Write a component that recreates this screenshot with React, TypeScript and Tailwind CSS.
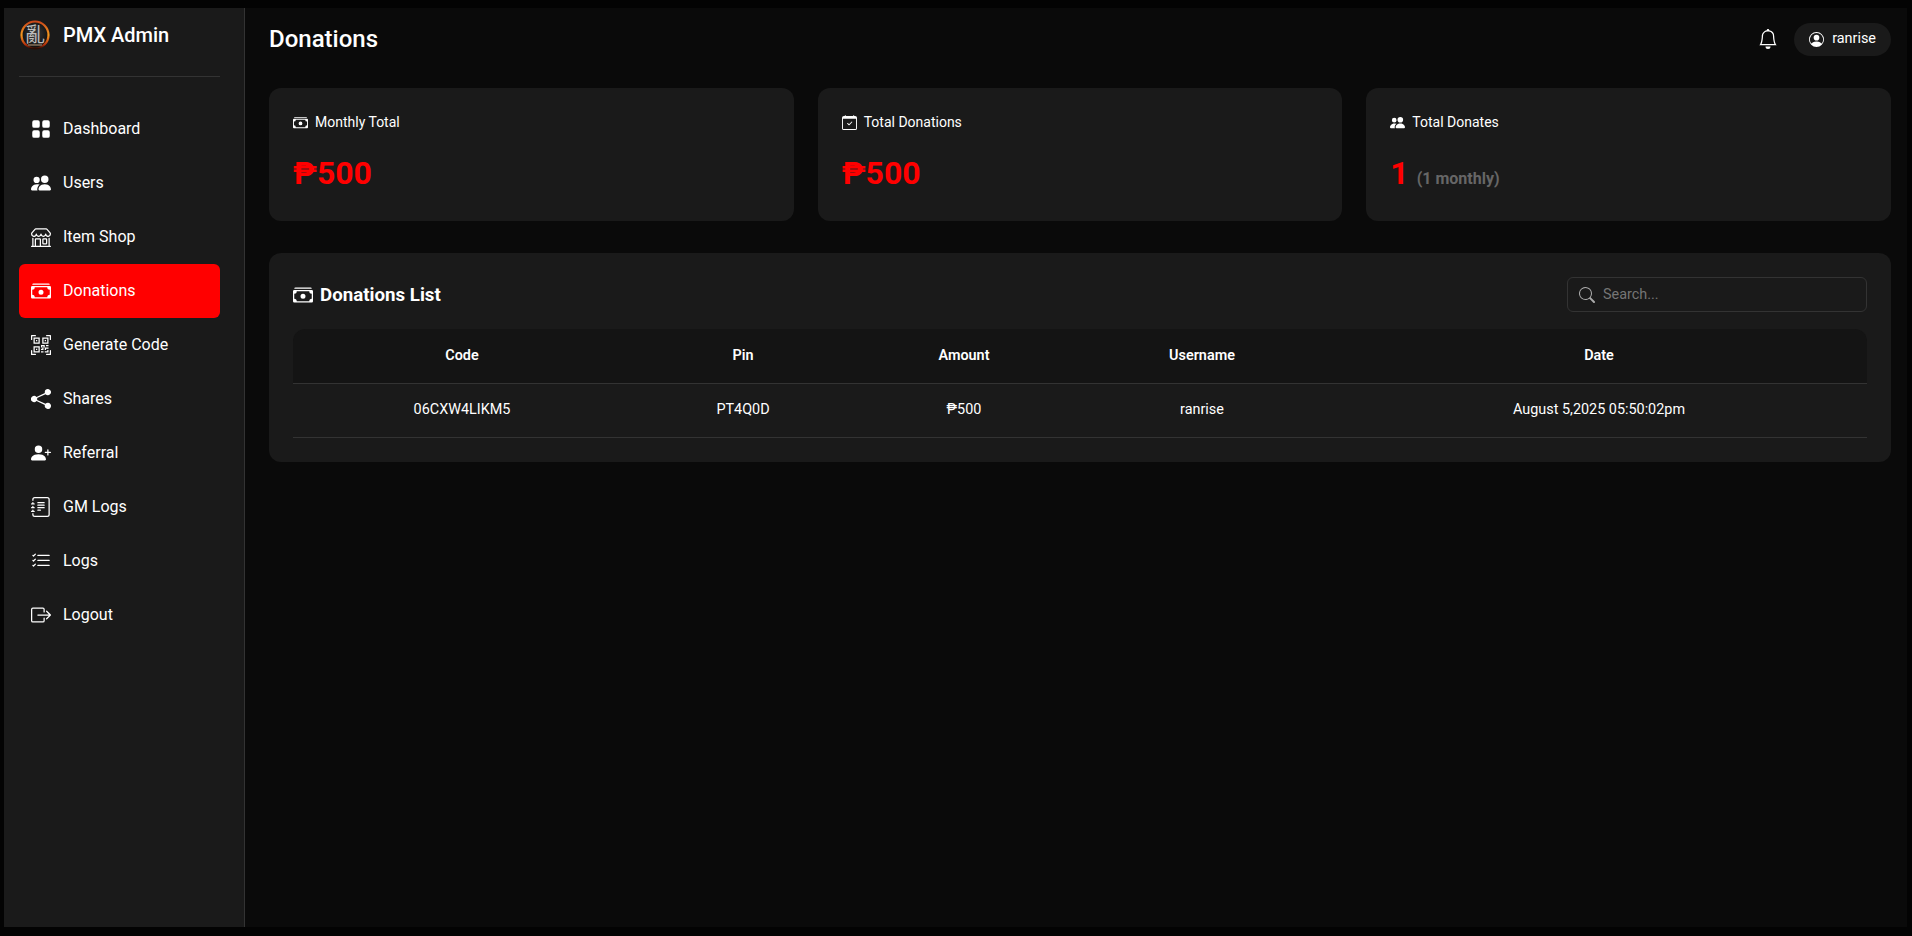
import { FC, ReactNode } from "react";
import {
  BsBell,
  BsBoxArrowRight,
  BsCalendarCheck,
  BsCashStack,
  BsFillGridFill,
  BsJournalText,
  BsListCheck,
  BsPeopleFill,
  BsPersonCircle,
  BsPersonPlusFill,
  BsQrCodeScan,
  BsSearch,
  BsShareFill,
  BsShop,
} from "react-icons/bs";

const navItems = [
  { label: "Dashboard", icon: <BsFillGridFill /> },
  { label: "Users", icon: <BsPeopleFill /> },
  { label: "Item Shop", icon: <BsShop /> },
  { label: "Donations", icon: <BsCashStack />, active: true },
  { label: "Generate Code", icon: <BsQrCodeScan /> },
  { label: "Shares", icon: <BsShareFill /> },
  { label: "Referral", icon: <BsPersonPlusFill /> },
  { label: "GM Logs", icon: <BsJournalText /> },
  { label: "Logs", icon: <BsListCheck /> },
  { label: "Logout", icon: <BsBoxArrowRight /> },
];

const Logo: FC = () => (
  <svg width="32" height="32" viewBox="0 0 32 32" className="shrink-0">
    <defs>
      <radialGradient id="logoFill" cx="50%" cy="45%" r="55%">
        <stop offset="0%" stopColor="#3d3d3d" />
        <stop offset="100%" stopColor="#0d0d0d" />
      </radialGradient>
      <linearGradient id="logoRing" x1="0" y1="0" x2="0" y2="1">
        <stop offset="0%" stopColor="#c9471a" />
        <stop offset="50%" stopColor="#f59a1f" />
        <stop offset="85%" stopColor="#b8320c" />
        <stop offset="100%" stopColor="#2a0c04" />
      </linearGradient>
    </defs>
    <circle cx="16" cy="16" r="13.5" fill="url(#logoFill)" stroke="url(#logoRing)" strokeWidth="2.2" />
    <text
      x="16"
      y="23"
      textAnchor="middle"
      fontSize="20"
      fill="#bdbdbd"
      fontFamily="'Noto Sans CJK TC', sans-serif"
    >
      亂
    </text>
    <rect x="9" y="25" width="14" height="2" fill="#6b5a4a" />
  </svg>
);

const StatCard: FC<{ icon: ReactNode; label: string; children: ReactNode }> = ({
  icon,
  label,
  children,
}) => (
  <div className="flex-1 h-[133px] bg-[#1a1a1a] rounded-xl pt-6 px-6">
    <div className="flex items-center gap-[7px] text-sm h-5 text-white">
      <span className="text-[15px]">{icon}</span>
      {label}
    </div>
    <div className="mt-[17px] flex items-baseline">{children}</div>
  </div>
);

const App: FC = () => {
  return (
    <div className="h-screen bg-[#030303] pt-2 pl-1 pr-[5px] pb-[9px] overflow-hidden font-['Roboto',sans-serif] text-white">
      <div className="h-full flex bg-[#0a0a0a]">
        <aside className="w-[241px] shrink-0 bg-[#1a1a1a] border-r border-[#333] pl-[15px] pr-6">
          <div className="flex items-center gap-3 h-[69px] pb-[14px] border-b border-[#333]">
            <Logo />
            <span className="text-xl font-medium">PMX Admin</span>
          </div>
          <nav className="mt-[25px]">
            {navItems.map((item) => (
              <div
                key={item.label}
                className={`flex items-center h-[54px] pl-3 gap-3 rounded-md ${
                  item.active ? "bg-[#ff0000]" : ""
                }`}
              >
                <span className="text-xl">{item.icon}</span>
                <span className="text-base">{item.label}</span>
              </div>
            ))}
          </nav>
        </aside>

        <main className="flex-1 pl-6 pr-4">
          <header className="h-[60px] pt-[2px] flex items-center justify-between">
            <h1 className="text-2xl font-medium">Donations</h1>
            <div className="flex items-center gap-4">
              <BsBell className="text-xl" />
              <div className="flex items-center gap-2 h-[33px] px-[15px] rounded-full bg-[#1a1a1a] text-[14.4px]">
                <BsPersonCircle className="text-[15px]" />
                ranrise
              </div>
            </div>
          </header>

          <div className="mt-5 flex gap-6">
            <StatCard icon={<BsCashStack />} label="Monthly Total">
              <span className="text-[32px] font-bold text-[#ff0000]">₱500</span>
            </StatCard>
            <StatCard icon={<BsCalendarCheck />} label="Total Donations">
              <span className="text-[32px] font-bold text-[#ff0000]">₱500</span>
            </StatCard>
            <StatCard icon={<BsPeopleFill />} label="Total Donates">
              <span className="text-[32px] font-bold text-[#ff0000]">1</span>
              <span className="ml-2 text-base font-bold text-[#666]">
                (1 monthly)
              </span>
            </StatCard>
          </div>

          <section className="mt-8 bg-[#1a1a1a] rounded-xl p-6">
            <div className="flex items-center justify-between">
              <h2 className="mt-[2px] flex items-center gap-[7px] text-[18.72px] font-bold">
                <BsCashStack className="text-xl" />
                Donations List
              </h2>
              <div className="w-[300px] h-[35px] flex items-center gap-2 px-[11px] rounded-md border border-[#333]">
                <BsSearch className="text-base text-[#aaa]" />
                <span className="text-[14.4px] text-[#757575]">Search...</span>
              </div>
            </div>

            <table className="mt-[17px] w-full table-fixed text-[14.4px] text-center">
              <thead>
                <tr className="bg-[#141414] border-b border-[#333] h-[54px]">
                  <th className="w-[338px] font-semibold rounded-tl-xl">Code</th>
                  <th className="w-[224px] font-semibold">Pin</th>
                  <th className="w-[218px] font-semibold">Amount</th>
                  <th className="w-[258px] font-semibold">Username</th>
                  <th className="font-semibold rounded-tr-xl">Date</th>
                </tr>
              </thead>
              <tbody>
                <tr className="border-b border-[#333] h-[54px]">
                  <td>06CXW4LIKM5</td>
                  <td>PT4Q0D</td>
                  <td>₱500</td>
                  <td>ranrise</td>
                  <td>August 5,2025 05:50:02pm</td>
                </tr>
              </tbody>
            </table>
          </section>
        </main>
      </div>
    </div>
  );
};

export default App;
